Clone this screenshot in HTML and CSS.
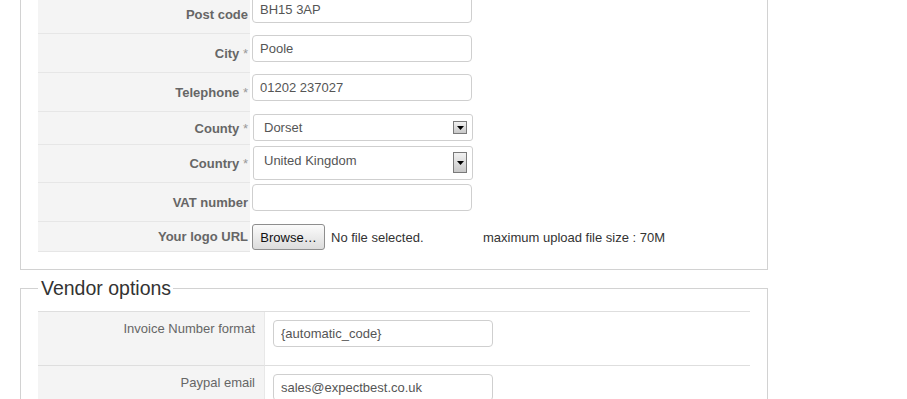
FILE: index.html
```html
<!DOCTYPE html>
<html lang="en">
  <head>
    <meta charset="UTF-8" />
    <meta name="viewport" content="width=device-width, initial-scale=1.0" />
    <title>Vendor details</title>
    <link rel="stylesheet" href="styles.css">
  </head>
  <body>
    <div class="page">
      <fieldset class="box">
        <table class="details">
          <tr>
            <td class="key">Post code</td>
            <td class="val"><input type="text" class="text" value="BH15 3AP" /></td>
          </tr>
          <tr>
            <td class="key">City <span class="req">*</span></td>
            <td class="val"><input type="text" class="text" value="Poole" /></td>
          </tr>
          <tr>
            <td class="key">Telephone <span class="req">*</span></td>
            <td class="val"><input type="text" class="text" value="01202 237027" /></td>
          </tr>
          <tr>
            <td class="key">County <span class="req">*</span></td>
            <td class="val">
              <div class="select">
                <span class="select-text">Dorset</span>
                <span class="arrow"><svg width="7" height="4" viewBox="0 0 7 4"><path d="M0 0H7L3.5 4Z" fill="#000"/></svg></span>
              </div>
            </td>
          </tr>
          <tr>
            <td class="key">Country <span class="req">*</span></td>
            <td class="val">
              <div class="select tall">
                <span class="select-text">United Kingdom</span>
                <span class="arrow"><svg width="7" height="4" viewBox="0 0 7 4"><path d="M0 0H7L3.5 4Z" fill="#000"/></svg></span>
              </div>
            </td>
          </tr>
          <tr>
            <td class="key">VAT number</td>
            <td class="val"><input type="text" class="text" value="" /></td>
          </tr>
          <tr>
            <td class="key">Your logo URL</td>
            <td class="val">
              <div class="upload">
                <div class="file-input">
                  <span class="browse">Browse…</span>
                  <span class="file-name">No file selected.</span>
                </div>
                <span class="hint">maximum upload file size : 70M</span>
              </div>
            </td>
          </tr>
        </table>
      </fieldset>

      <fieldset class="box vendor">
        <legend>Vendor options</legend>
        <table class="options">
          <tr>
            <td class="key">Invoice Number format</td>
            <td class="val"><input type="text" class="text" value="{automatic_code}" /></td>
          </tr>
          <tr>
            <td class="key">Paypal email</td>
            <td class="val"><input type="text" class="text" value="sales@expectbest.co.uk" /></td>
          </tr>
        </table>
      </fieldset>
    </div>
  </body>
</html>
```

FILE: styles.css
```css
body {
  margin: 0;
  font-family: "Liberation Sans", Arial, sans-serif;
  font-size: 13px;
  color: #333;
  background: #fff;
}

.page {
  margin-top: -23px;
  padding-left: 20px;
  width: 748px;
}

.box {
  margin: 0 0 7px 0;
  padding: 17px;
  border: 1px solid #d2d2d2;
  min-width: 0;
}

.box.vendor {
  padding-top: 11px;
}

.box legend {
  padding: 0 2px 0 3px;
  font-size: 19.5px;
  color: #333;
}

table {
  border-collapse: separate;
  border-spacing: 0;
  width: 712px;
}

.text {
  display: block;
  box-sizing: border-box;
  width: 220px;
  height: 27px;
  margin: 0 0 10px 0;
  padding: 0 7px;
  border: 1px solid #cfcfcf;
  border-radius: 4px;
  font-family: "Liberation Sans", Arial, sans-serif;
  font-size: 13px;
  color: #555;
  background: #fff;
}

/* top details table */
.details .key {
  width: 210px;
  padding: 0 2px 0 0;
  background: #f4f4f4;
  border-bottom: 1px solid #e6e6e6;
  text-align: right;
  vertical-align: middle;
  font-weight: bold;
  color: #666;
  white-space: nowrap;
}

.details .req {
  font-weight: normal;
  color: #999;
}

.details .val {
  padding: 1px 0 1px 2px;
  vertical-align: top;
}

.select {
  box-sizing: border-box;
  display: flex;
  justify-content: space-between;
  align-items: center;
  width: 220px;
  height: 27px;
  margin: 1px 0 3px 1px;
  padding: 0 5px 0 10px;
  border: 1px solid #cfcfcf;
  border-radius: 3px;
  color: #555;
}

.select.tall {
  height: 34px;
  margin: 0 0 2px 1px;
  align-items: flex-start;
}

.select.tall .select-text {
  margin-top: 6px;
}

.select.tall .arrow {
  height: 21px;
  margin-top: 5px;
}

.arrow {
  box-sizing: border-box;
  display: flex;
  align-items: center;
  justify-content: center;
  width: 14px;
  height: 13px;
  border: 1px solid #7a7a7a;
  background: linear-gradient(#f2f2f2, #c8c8c8);
}

.arrow svg {
  display: block;
}

.upload {
  display: flex;
  align-items: center;
  margin: 1px 0;
}

.file-input {
  display: flex;
  align-items: center;
  width: 231px;
}

.browse {
  box-sizing: border-box;
  display: flex;
  align-items: center;
  justify-content: center;
  width: 73px;
  height: 26px;
  border: 1px solid #8e8e8e;
  border-radius: 3px;
  background: linear-gradient(#fbfbfb, #dcdcdc);
  color: #111;
  font-size: 13px;
}

.file-name {
  margin-left: 6px;
  color: #333;
}

.hint {
  color: #333;
}

/* vendor options table */
.options {
  border-top: 1px solid #dedede;
}

.options td {
  border-bottom: 1px solid #dedede;
  vertical-align: top;
}

.options .key {
  width: 208px;
  padding: 8px 9px;
  background: #f4f4f4;
  border-right: 1px solid #e8e8e8;
  text-align: right;
  color: #666;
  line-height: 18px;
}

.options .val {
  padding: 8px;
}
```
